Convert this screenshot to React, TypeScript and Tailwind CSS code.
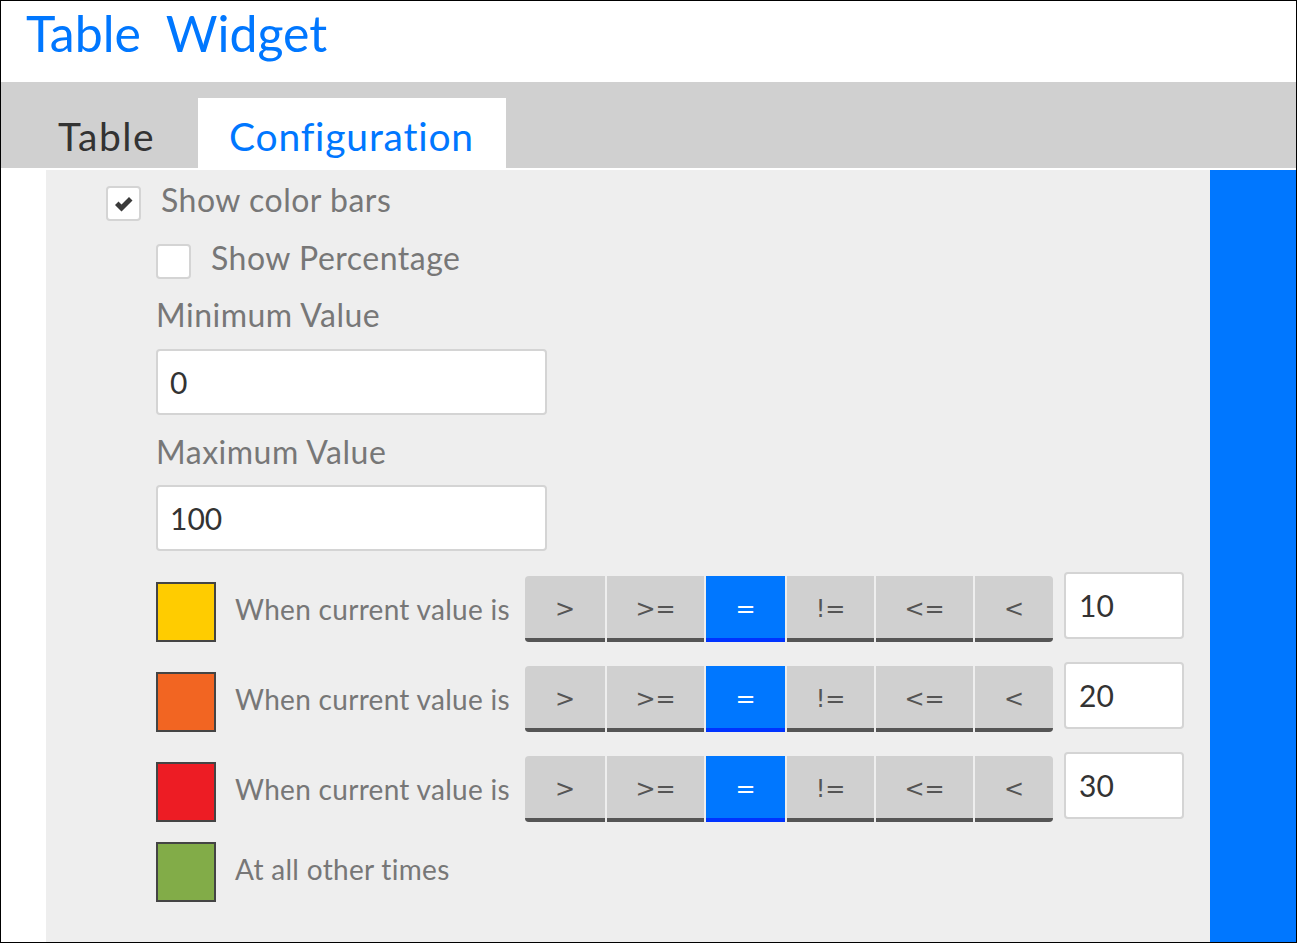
import React from "react";

const ops = [">", ">=", "=", "!=", "<=", "<"];
const opWidths = ["w-[80px]", "w-[97px]", "w-[79px]", "w-[87px]", "w-[97px]", "w-[78px]"];

const rules = [
  { color: "bg-[#ffcc00]", value: "10" },
  { color: "bg-[#f26522]", value: "20" },
  { color: "bg-[#ed1c24]", value: "30" },
];

function Check({ checked }: { checked: boolean }) {
  return (
    <div className="w-[35px] h-[35px] shrink-0 bg-white border-2 border-[#d4d4d4] rounded-[4px] flex items-center justify-center">
      {checked && (
        <svg width="20" height="16" viewBox="0 0 20 16">
          <path d="M1 9 L4.5 5.5 L7.5 8.5 L15 1 L18.5 4.5 L7.5 15.5 Z" fill="#3a3a3a" />
        </svg>
      )}
    </div>
  );
}

function RuleRow({ color, value }: { color: string; value: string }) {
  return (
    <div className="flex items-start h-[70px]">
      <div className={`mt-[10px] w-[60px] h-[60px] border-2 border-[#444] ${color}`} />
      <div className="mt-[23px] ml-[19px] w-[290px] text-[28px] leading-none tracking-[0.3px] text-[#777]">
        When current value is
      </div>
      <div className="mt-[4px] flex gap-[2px] rounded-[4px] overflow-hidden">
        {ops.map((op, i) => (
          <div
            key={op}
            className={`${opWidths[i]} h-[66px] pt-[4px] flex items-center justify-center text-[24px] border-b-4 ${
              op === "="
                ? "bg-[#0077ff] border-[#0033ff] text-white"
                : "bg-[#d0d0d0] border-[#555] text-[#555]"
            }`}
            style={{ fontFamily: "'DejaVu Sans', sans-serif" }}
          >
            {op}
          </div>
        ))}
      </div>
      <div className="ml-[11px] w-[120px] h-[67px] bg-white border-2 border-[#d4d4d4] rounded-[4px] flex items-center pl-[13px] text-[30px] text-[#333]">
        {value}
      </div>
    </div>
  );
}

export default function App() {
  return (
    <div
      className="w-[1297px] h-[943px] border border-black bg-white flex flex-col overflow-hidden"
      style={{ fontFamily: "Lato, 'Noto Sans', sans-serif" }}
    >
      <div className="h-[81px] pl-[25px] pt-[7px]">
        <h1 className="text-[50px] leading-none text-[#0077ff] whitespace-pre">Table  Widget</h1>
      </div>

      <div className="h-[86px] bg-[#d0d0d0] flex items-end">
        <div className="w-[197px] h-[70px] pl-[57px] pt-[19px] text-[39px] leading-none tracking-[1.5px] text-[#333]">
          Table
        </div>
        <div className="w-[308px] h-[70px] bg-white pl-[31px] pt-[19px] text-[39px] leading-none tracking-[0.8px] text-[#0077ff]">
          Configuration
        </div>
      </div>

      <div className="h-[2px]" />

      <div className="flex-1 flex">
        <div className="w-[45px]" />
        <div className="flex-1 bg-[#eeeeee] pt-[16px] pl-[60px] flex flex-col">
          <div className="flex items-start h-[35px]">
            <Check checked />
            <span className="ml-[20px] -mt-[2px] text-[32px] leading-none tracking-[0.5px] text-[#777]">
              Show color bars
            </span>
          </div>

          <div className="mt-[23px] ml-[50px] flex items-start h-[35px]">
            <Check checked={false} />
            <span className="ml-[20px] -mt-[2px] text-[32px] leading-none tracking-[0.5px] text-[#777]">
              Show Percentage
            </span>
          </div>

          <div className="ml-[50px] flex flex-col">
            <div className="mt-[20px] text-[32px] leading-none tracking-[0.5px] text-[#777]">Minimum Value</div>
            <div className="mt-[18px] w-[391px] h-[66px] bg-white border-2 border-[#d4d4d4] rounded-[4px] flex items-center pl-[12px] text-[30px] text-[#333]">
              0
            </div>
            <div className="mt-[21px] text-[32px] leading-none tracking-[0.5px] text-[#777]">Maximum Value</div>
            <div className="mt-[17px] w-[391px] h-[66px] bg-white border-2 border-[#d4d4d4] rounded-[4px] flex items-center pl-[12px] text-[30px] text-[#333]">
              100
            </div>

            <div className="mt-[21px] flex flex-col gap-[20px]">
              {rules.map((r) => (
                <RuleRow key={r.value} color={r.color} value={r.value} />
              ))}
              <div className="-mt-[10px] flex items-start h-[70px]">
                <div className="mt-[10px] w-[60px] h-[60px] border-2 border-[#444] bg-[#82ac48]" />
                <div className="mt-[23px] ml-[19px] text-[28px] leading-none tracking-[0.3px] text-[#777]">
                  At all other times
                </div>
              </div>
            </div>
          </div>
        </div>
        <div className="w-[86px] bg-[#0077ff]" />
      </div>
    </div>
  );
}
